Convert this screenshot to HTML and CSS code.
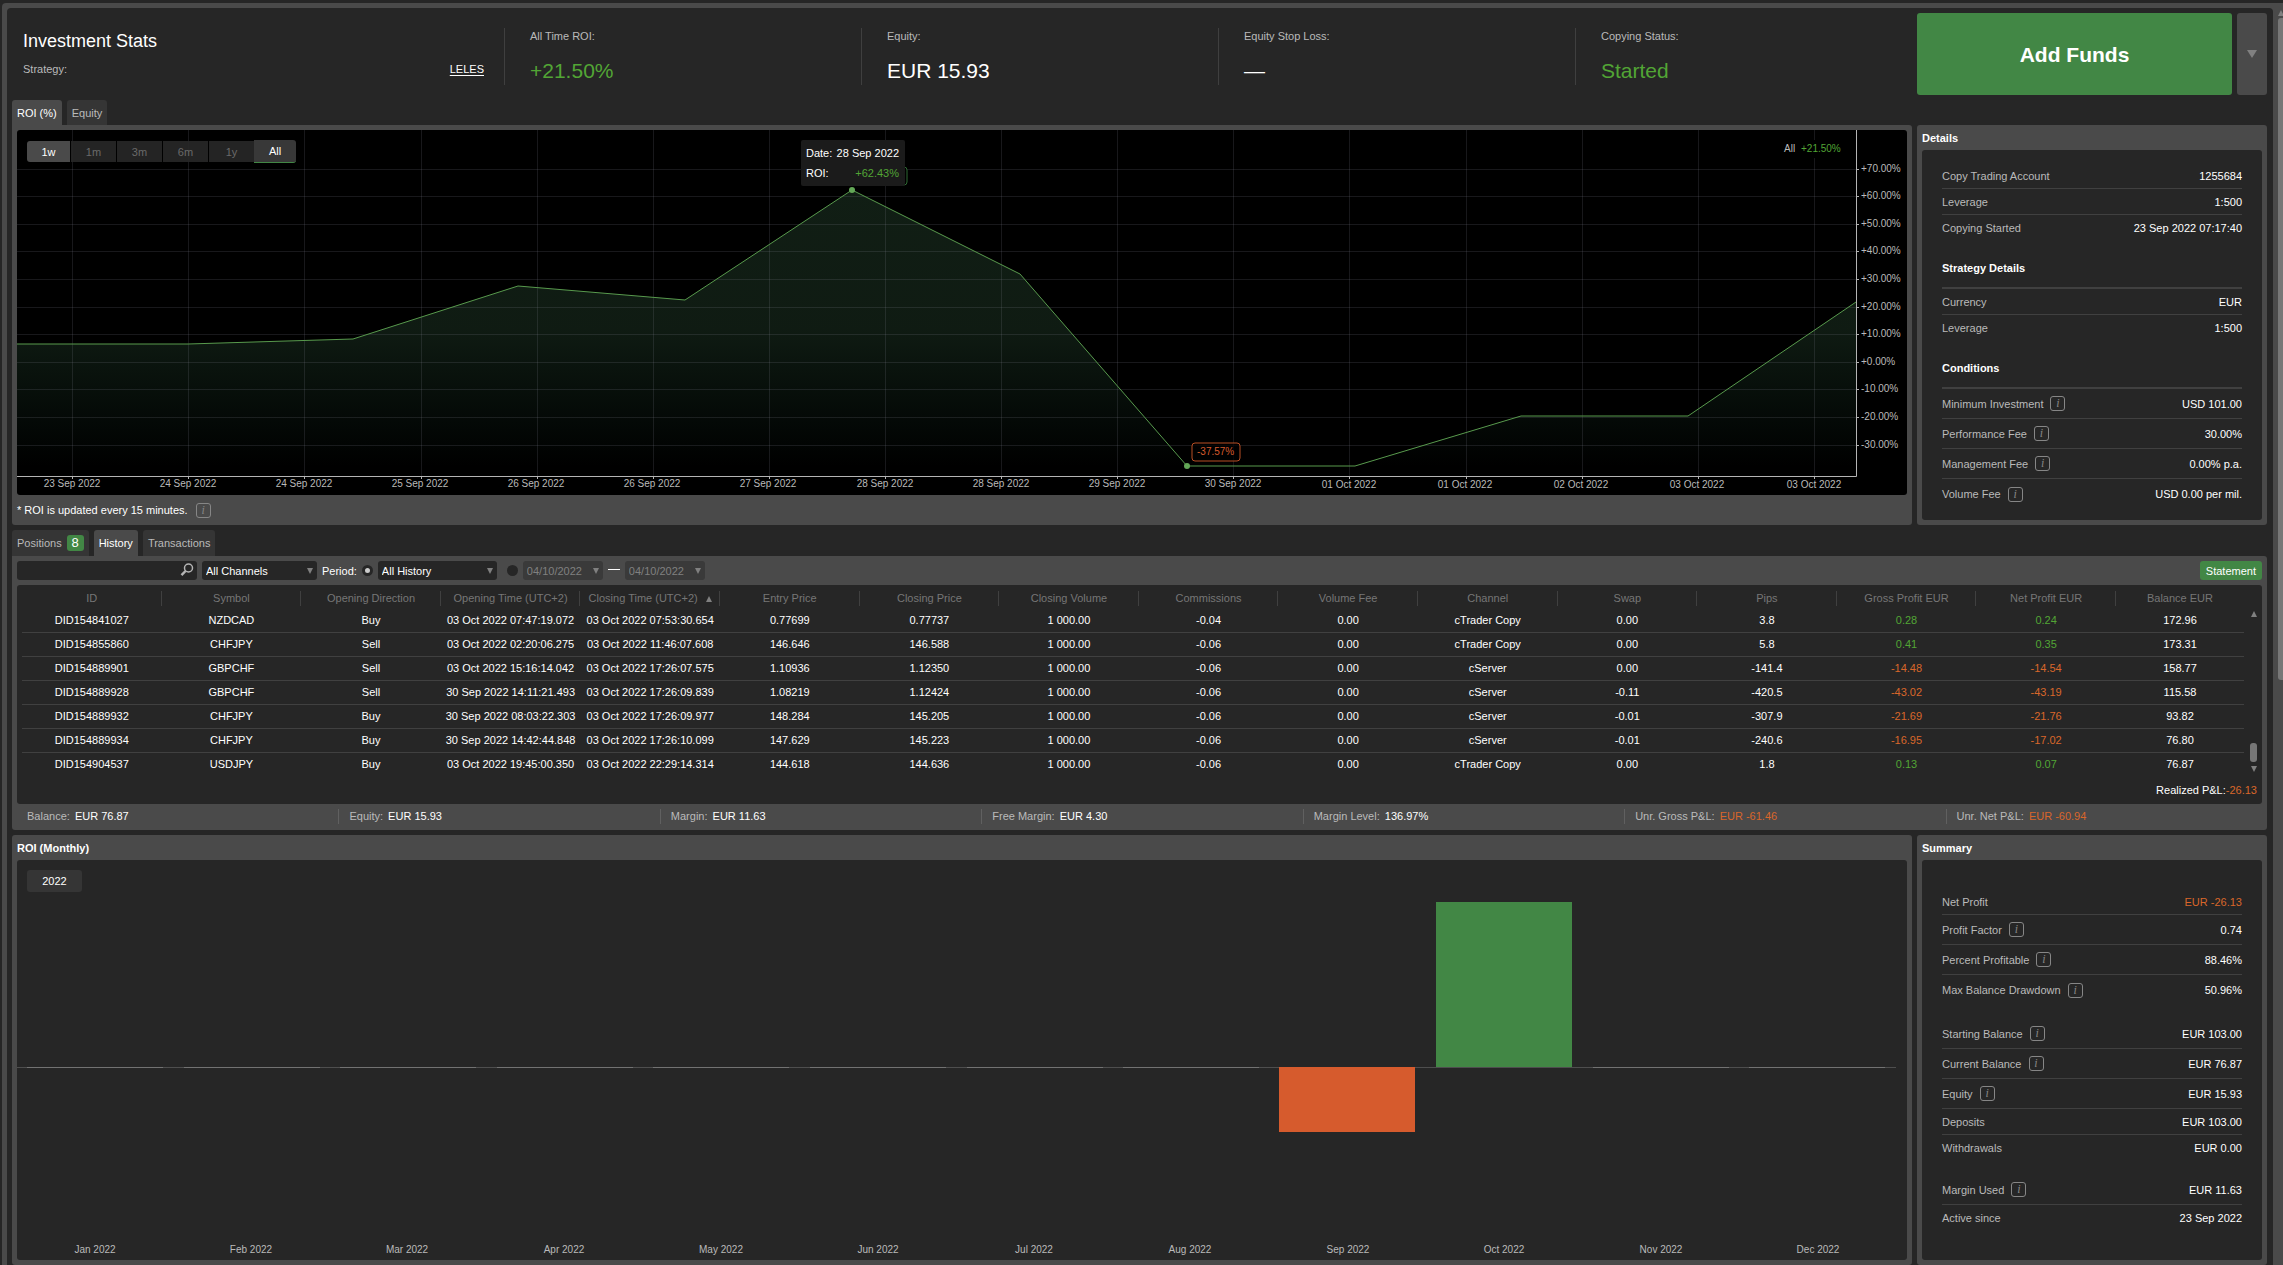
FILE: index.html
```html
<!DOCTYPE html>
<html lang="en">
<head>
    <meta charset="UTF-8">
    <meta name="viewport" content="width=device-width, initial-scale=1.0">
    <title>Investment Stats</title>
    <link rel="stylesheet" href="styles.css">
</head>
<body>

<div class="window">
<main class="page">

<header class="top">
    <div class="stats">
        <div class="title">
            <h1>Investment Stats</h1>
            <p class="strategy"><span>Strategy:</span> <a href="#">LELES</a></p>
        </div>
        <div class="stat">
            <span class="stat-label">All Time ROI:</span>
            <span class="stat-value green">+21.50%</span>
        </div>
        <div class="stat">
            <span class="stat-label">Equity:</span>
            <span class="stat-value">EUR 15.93</span>
        </div>
        <div class="stat">
            <span class="stat-label">Equity Stop Loss:</span>
            <span class="stat-value">—</span>
        </div>
        <div class="stat">
            <span class="stat-label">Copying Status:</span>
            <span class="stat-value green">Started</span>
        </div>
    </div>
    <div class="funds">
        <button class="add-funds">Add Funds</button>
        <button class="more" aria-label="More actions"><span class="arrow-down"></span></button>
    </div>
</header>

<nav class="tabs">
    <button class="tab active">ROI (%)</button>
    <button class="tab">Equity</button>
</nav>

<div class="columns">
    <section class="panel attached">
        <div class="chart-box black">
            <svg class="chart" viewBox="0 0 1890 365">
                <defs>
                    <linearGradient id="area" gradientUnits="userSpaceOnUse" x1="0" y1="60" x2="0" y2="336">
                        <stop offset="0" stop-color="#508f62" stop-opacity="0.21"/>
                        <stop offset="0.5" stop-color="#508f62" stop-opacity="0.19"/>
                        <stop offset="0.95" stop-color="#3c8f62" stop-opacity="0.02"/>
                        <stop offset="1" stop-color="#508f62" stop-opacity="0"/>
                    </linearGradient>
                </defs>
                <path fill="url(#area)" d="M0 214L171 214L336 209L501 156L668 170L835 60L1003 144L1170 336L1338 336L1504 286L1671 286L1839 172V346H0Z"/>
                <!-- grid -->
                <path class="grid" d="M0 39.5H1839M0 66.5H1839M0 94.5H1839M0 121.5H1839M0 149.5H1839M0 177.5H1839M0 204.5H1839M0 232.5H1839M0 259.5H1839M0 287.5H1839M0 315.5H1839"/>
                <path class="grid" d="M55.5 0V346M171.5 0V346M287.5 0V346M404.5 0V346M520.5 0V346M636.5 0V346M752.5 0V346M868.5 0V346M984.5 0V346M1100.5 0V346M1216.5 0V346M1332.5 0V346M1449.5 0V346M1565.5 0V346M1681.5 0V346M1797.5 0V346"/>
                <!-- axes and ticks -->
                <path class="axis" d="M0 346.5H1839.5V0M1840 39.5h2M1840 66.5h2M1840 94.5h2M1840 121.5h2M1840 149.5h2M1840 177.5h2M1840 204.5h2M1840 232.5h2M1840 259.5h2M1840 287.5h2M1840 315.5h2"/>
                <path class="axis" d="M55.5 347v2M171.5 347v2M287.5 347v2M404.5 347v2M520.5 347v2M636.5 347v2M752.5 347v2M868.5 347v2M984.5 347v2M1100.5 347v2M1216.5 347v2M1332.5 347v2M1449.5 347v2M1565.5 347v2M1681.5 347v2M1797.5 347v2"/>
                <path class="series" d="M0 214L171 214L336 209L501 156L668 170L835 60L1003 144L1170 336L1338 336L1504 286L1671 286L1839 172"/>
                <g class="ticks">
                    <text x="1844" y="42">+70.00%</text>
                    <text x="1844" y="69">+60.00%</text>
                    <text x="1844" y="97">+50.00%</text>
                    <text x="1844" y="124">+40.00%</text>
                    <text x="1844" y="152">+30.00%</text>
                    <text x="1844" y="180">+20.00%</text>
                    <text x="1844" y="207">+10.00%</text>
                    <text x="1844" y="235">+0.00%</text>
                    <text x="1844" y="262">-10.00%</text>
                    <text x="1844" y="290">-20.00%</text>
                    <text x="1844" y="318">-30.00%</text>
                </g>
                <g class="ticks centered">
                    <text x="55" y="357">23 Sep 2022</text>
                    <text x="171" y="357">24 Sep 2022</text>
                    <text x="287" y="357">24 Sep 2022</text>
                    <text x="403" y="357">25 Sep 2022</text>
                    <text x="519" y="357">26 Sep 2022</text>
                    <text x="635" y="357">26 Sep 2022</text>
                    <text x="751" y="357">27 Sep 2022</text>
                    <text x="868" y="357">28 Sep 2022</text>
                    <text x="984" y="357">28 Sep 2022</text>
                    <text x="1100" y="357">29 Sep 2022</text>
                    <text x="1216" y="357">30 Sep 2022</text>
                    <text x="1332" y="358">01 Oct 2022</text>
                    <text x="1448" y="358">01 Oct 2022</text>
                    <text x="1564" y="358">02 Oct 2022</text>
                    <text x="1680" y="358">03 Oct 2022</text>
                    <text x="1797" y="358">03 Oct 2022</text>
                </g>
                <circle class="dot" cx="835" cy="60" r="3"/>
                <circle class="dot" cx="1170" cy="336" r="3"/>
                <!-- total -->
                <rect x="1759" y="10" width="69" height="18"/>
                <text class="small" x="1767" y="22">All</text>
                <text class="small pos" x="1784" y="22">+21.50%</text>
                <!-- min and max labels -->
                <rect class="min-label" x="1175" y="313" width="48" height="18" rx="3"/>
                <text class="small min-text" x="1180" y="325">-37.57%</text>
                <rect class="max-label" x="841" y="37" width="49" height="18" rx="3"/>
                <rect class="tip" x="784" y="10" width="104" height="46" rx="2"/>
                <text class="tip-text" x="789" y="27">Date:</text>
                <text class="tip-text end" x="882" y="27">28 Sep 2022</text>
                <text class="tip-text" x="789" y="47">ROI:</text>
                <text class="tip-text end pos" x="882" y="47">+62.43%</text>
            </svg>
            <div class="ranges">
                <button class="range hover">1w</button>
                <button class="range">1m</button>
                <button class="range">3m</button>
                <button class="range">6m</button>
                <button class="range">1y</button>
                <button class="range all">All</button>
            </div>
        </div>
        <p class="note">* ROI is updated every 15 minutes. <i class="info">i</i></p>
    </section>

    <section class="panel">
        <h2>Details</h2>
        <div class="box details">
            <dl>
                <div><dt>Copy Trading Account</dt><dd>1255684</dd></div>
                <div><dt>Leverage</dt><dd>1:500</dd></div>
                <div><dt>Copying Started</dt><dd>23 Sep 2022 07:17:40</dd></div>
            </dl>
            <h3>Strategy Details</h3>
            <dl>
                <div><dt>Currency</dt><dd>EUR</dd></div>
                <div><dt>Leverage</dt><dd>1:500</dd></div>
            </dl>
            <h3>Conditions</h3>
            <dl>
                <div class="tall"><dt>Minimum Investment <i class="info">i</i></dt><dd>USD 101.00</dd></div>
                <div class="tall"><dt>Performance Fee <i class="info">i</i></dt><dd>30.00%</dd></div>
                <div class="tall"><dt>Management Fee <i class="info">i</i></dt><dd>0.00% p.a.</dd></div>
                <div class="tall"><dt>Volume Fee <i class="info">i</i></dt><dd>USD 0.00 per mil.</dd></div>
            </dl>
        </div>
    </section>
</div>

<nav class="tabs lower">
    <button class="tab">Positions <span class="badge">8</span></button>
    <button class="tab active">History</button>
    <button class="tab">Transactions</button>
</nav>

<section class="panel attached history">
    <form class="toolbar">
        <div class="search">
            <input type="text" aria-label="Search">
            <svg viewBox="0 0 14 14" width="14" height="14"><circle cx="8.500" cy="5" r="4" fill="none" stroke="#b5b5b5" stroke-width="1.500"/><path d="M5.500 8L1.500 12.200" stroke="#b5b5b5" stroke-width="2.500"/></svg>
        </div>
        <div class="select channels">
            <select aria-label="Channel"><option>All Channels</option></select>
        </div>
        <label for="period-all">Period:</label>
        <input type="radio" name="period" id="period-all" checked>
        <div class="select period">
            <select aria-label="Period"><option>All History</option></select>
        </div>
        <input type="radio" name="period" id="period-range" aria-label="Date range" class="range-radio">
        <div class="select date">
            <select aria-label="From" disabled><option>04/10/2022</option></select>
        </div>
        <span class="dash"></span>
        <div class="select date">
            <select aria-label="To" disabled><option>04/10/2022</option></select>
        </div>
        <button type="button" class="statement">Statement</button>
    </form>

    <div class="box">
        <div class="table-row">
        <div class="table-wrap">
        <table>
            <thead>
                <tr>
                    <th>ID</th><th>Symbol</th><th>Opening Direction</th><th>Opening Time (UTC+2)</th>
                    <th>Closing Time (UTC+2)<span class="arrow-up"></span></th>
                    <th>Entry Price</th><th>Closing Price</th><th>Closing Volume</th><th>Commissions</th>
                    <th>Volume Fee</th><th>Channel</th><th>Swap</th><th>Pips</th>
                    <th>Gross Profit EUR</th><th>Net Profit EUR</th><th class="last">Balance EUR</th>
                </tr>
            </thead>
            <tbody>
                <tr>
                    <td>DID154841027</td><td>NZDCAD</td><td>Buy</td><td>03 Oct 2022 07:47:19.072</td><td>03 Oct 2022 07:53:30.654</td>
                    <td>0.77699</td><td>0.77737</td><td>1 000.00</td><td>-0.04</td><td>0.00</td><td>cTrader Copy</td><td>0.00</td>
                    <td>3.8</td><td class="green">0.28</td><td class="green">0.24</td><td>172.96</td>
                </tr>
                <tr>
                    <td>DID154855860</td><td>CHFJPY</td><td>Sell</td><td>03 Oct 2022 02:20:06.275</td><td>03 Oct 2022 11:46:07.608</td>
                    <td>146.646</td><td>146.588</td><td>1 000.00</td><td>-0.06</td><td>0.00</td><td>cTrader Copy</td><td>0.00</td>
                    <td>5.8</td><td class="green">0.41</td><td class="green">0.35</td><td>173.31</td>
                </tr>
                <tr>
                    <td>DID154889901</td><td>GBPCHF</td><td>Sell</td><td>03 Oct 2022 15:16:14.042</td><td>03 Oct 2022 17:26:07.575</td>
                    <td>1.10936</td><td>1.12350</td><td>1 000.00</td><td>-0.06</td><td>0.00</td><td>cServer</td><td>0.00</td>
                    <td>-141.4</td><td class="orange">-14.48</td><td class="orange">-14.54</td><td>158.77</td>
                </tr>
                <tr>
                    <td>DID154889928</td><td>GBPCHF</td><td>Sell</td><td>30 Sep 2022 14:11:21.493</td><td>03 Oct 2022 17:26:09.839</td>
                    <td>1.08219</td><td>1.12424</td><td>1 000.00</td><td>-0.06</td><td>0.00</td><td>cServer</td><td>-0.11</td>
                    <td>-420.5</td><td class="orange">-43.02</td><td class="orange">-43.19</td><td>115.58</td>
                </tr>
                <tr>
                    <td>DID154889932</td><td>CHFJPY</td><td>Buy</td><td>30 Sep 2022 08:03:22.303</td><td>03 Oct 2022 17:26:09.977</td>
                    <td>148.284</td><td>145.205</td><td>1 000.00</td><td>-0.06</td><td>0.00</td><td>cServer</td><td>-0.01</td>
                    <td>-307.9</td><td class="orange">-21.69</td><td class="orange">-21.76</td><td>93.82</td>
                </tr>
                <tr>
                    <td>DID154889934</td><td>CHFJPY</td><td>Buy</td><td>30 Sep 2022 14:42:44.848</td><td>03 Oct 2022 17:26:10.099</td>
                    <td>147.629</td><td>145.223</td><td>1 000.00</td><td>-0.06</td><td>0.00</td><td>cServer</td><td>-0.01</td>
                    <td>-240.6</td><td class="orange">-16.95</td><td class="orange">-17.02</td><td>76.80</td>
                </tr>
                <tr>
                    <td>DID154904537</td><td>USDJPY</td><td>Buy</td><td>03 Oct 2022 19:45:00.350</td><td>03 Oct 2022 22:29:14.314</td>
                    <td>144.618</td><td>144.636</td><td>1 000.00</td><td>-0.06</td><td>0.00</td><td>cTrader Copy</td><td>0.00</td>
                    <td>1.8</td><td class="green">0.13</td><td class="green">0.07</td><td>76.87</td>
                </tr>
            </tbody>
        </table>
        </div>
        <div class="table-scroll">
            <span class="arrow-up"></span>
            <span class="table-thumb"></span>
            <span class="arrow-down"></span>
        </div>
        </div>
        <p class="realized">Realized P&amp;L:<span class="orange">-26.13</span></p>
    </div>

    <ul class="status">
        <li>Balance: <b>EUR 76.87</b></li>
        <li>Equity: <b>EUR 15.93</b></li>
        <li>Margin: <b>EUR 11.63</b></li>
        <li>Free Margin: <b>EUR 4.30</b></li>
        <li>Margin Level: <b>136.97%</b></li>
        <li>Unr. Gross P&amp;L: <b class="orange">EUR -61.46</b></li>
        <li>Unr. Net P&amp;L: <b class="orange">EUR -60.94</b></li>
    </ul>
</section>

<div class="columns">
    <section class="panel">
        <h2>ROI (Monthly)</h2>
        <div class="chart-box">
            <svg class="chart" viewBox="0 0 1890 400">
                <path stroke="#4e4e4e" d="M0 207.500H1879"/>
                <path stroke="#727272" d="M10 207.500h136M167 207.500h136M323 207.500h136M480 207.500h136M636 207.500h136M793 207.500h136M950 207.500h136M1106 207.500h136M1576 207.500h136M1732 207.500h136"/>
                <rect x="1262" y="207" width="136" height="65" fill="#d65b2d"/>
                <rect x="1419" y="42" width="136" height="165" fill="#428745"/>
                <g class="ticks centered">
                    <text x="78" y="393">Jan 2022</text>
                    <text x="234" y="393">Feb 2022</text>
                    <text x="390" y="393">Mar 2022</text>
                    <text x="547" y="393">Apr 2022</text>
                    <text x="704" y="393">May 2022</text>
                    <text x="861" y="393">Jun 2022</text>
                    <text x="1017" y="393">Jul 2022</text>
                    <text x="1173" y="393">Aug 2022</text>
                    <text x="1331" y="393">Sep 2022</text>
                    <text x="1487" y="393">Oct 2022</text>
                    <text x="1644" y="393">Nov 2022</text>
                    <text x="1801" y="393">Dec 2022</text>
                </g>
            </svg>
            <button class="year">2022</button>
        </div>
    </section>

    <section class="panel">
        <h2>Summary</h2>
        <div class="box summary">
            <dl>
                <div><dt>Net Profit</dt><dd class="orange">EUR -26.13</dd></div>
                <div class="tall"><dt>Profit Factor <i class="info">i</i></dt><dd>0.74</dd></div>
                <div class="tall"><dt>Percent Profitable <i class="info">i</i></dt><dd>88.46%</dd></div>
                <div class="tall"><dt>Max Balance Drawdown <i class="info">i</i></dt><dd>50.96%</dd></div>
            </dl>
            <dl>
                <div class="tall"><dt>Starting Balance <i class="info">i</i></dt><dd>EUR 103.00</dd></div>
                <div class="tall"><dt>Current Balance <i class="info">i</i></dt><dd>EUR 76.87</dd></div>
                <div class="tall"><dt>Equity <i class="info">i</i></dt><dd>EUR 15.93</dd></div>
                <div><dt>Deposits</dt><dd>EUR 103.00</dd></div>
                <div><dt>Withdrawals</dt><dd>EUR 0.00</dd></div>
            </dl>
            <dl>
                <div class="tall"><dt>Margin Used <i class="info">i</i></dt><dd>EUR 11.63</dd></div>
                <div><dt>Active since</dt><dd>23 Sep 2022</dd></div>
            </dl>
        </div>
    </section>
</div>

</main>
<div class="page-scroll">
    <span class="arrow-up"></span>
    <span class="page-thumb"></span>
</div>
</div>

</body>
</html>
```
FILE: styles.css
```css
* {
    box-sizing: border-box;
}
body {
    margin: 0;
    overflow: hidden;
    background-color: #262626;
    color: #fff;
    font-family: "Liberation Sans", Arial, sans-serif;
    font-size: 11px;
}
h1, h2, h3, p, dl, dd, ul {
    margin: 0;
    padding: 0;
}
button, input, select {
    font-family: inherit;
    font-size: 11px;
    color: #fff;
    border: 0;
    margin: 0;
    padding: 0;
}
.green {
    color: #52a535;
}
.orange {
    color: #d9662a;
}
.arrow-down, .arrow-up {
    display: inline-block;
    border: 3px solid transparent;
    flex: none;
}
.arrow-down {
    border-top: 6px solid #808080;
    border-bottom: 0;
}
.arrow-up {
    border-bottom: 6px solid #808080;
    border-top: 0;
}

/* page frame */
.window {
    display: flex;
    margin: 3px 0 0 2px;
    padding: 5px 0 0 5px;
    background-color: #4a4a4a;
    border-radius: 4px 0 0 0;
}
.page {
    flex: 1;
    min-width: 0;
    padding: 0 6px 0 5px;
    background-color: #262626;
    border-radius: 4px 4px 0 0;
}
.page-scroll {
    width: 10px;
    padding: 2px 0 0 5px;
    overflow: hidden;
}
.page-scroll .arrow-up {
    display: block;
    margin-bottom: 2px;
}
.page-thumb {
    display: block;
    width: 9px;
    height: 662px;
    border-radius: 3px;
    background-color: #777;
}

/* header */
.top {
    display: flex;
    gap: 5px;
    height: 92px;
}
.stats {
    flex: 1;
    display: grid;
    grid-template-columns: 492fr 357fr 357fr 357fr 337fr;
    padding-top: 20px;
}
.title {
    padding: 0 20px 0 11px;
}
h1 {
    font-size: 18px;
    font-weight: normal;
    line-height: 26px;
}
.strategy {
    display: flex;
    justify-content: space-between;
    margin-top: 7px;
    line-height: 16px;
    color: #bababa;
}
.strategy a {
    color: #fff;
    text-underline-offset: 2px;
}
.stat {
    height: 57px;
    padding-left: 25px;
    border-left: 1px solid #3f3f3f;
    display: flex;
    flex-direction: column;
    justify-content: space-between;
}
.stat-label {
    line-height: 16px;
    color: #bababa;
}
.stat-value {
    font-size: 21px;
    line-height: 28px;
}
.funds {
    width: 350px;
    height: 82px;
    margin-top: 5px;
    display: flex;
    gap: 5px;
}
.add-funds {
    flex: 1;
    padding-top: 2px;
    background-color: #428745;
    border-radius: 3px;
    font-size: 21px;
    font-weight: bold;
}
.more {
    width: 30px;
    background-color: #4a4a4a;
    border-radius: 3px;
}
.more .arrow-down {
    border-width: 8px 5px 0 5px;
}

/* tabs */
.tabs {
    display: flex;
    gap: 5px;
}
.tab {
    height: 25px;
    padding: 0 5px;
    display: flex;
    align-items: center;
    gap: 5px;
    background-color: #353535;
    color: #bababa;
    border-radius: 3px 3px 0 0;
}
.tab.active {
    background-color: #4a4a4a;
    color: #fff;
}
.lower {
    margin-top: 5px;
}
.lower .tab {
    height: 26px;
}
.badge {
    width: 17px;
    line-height: 16px;
    border-radius: 3px;
    background-color: #428745;
    color: #fff;
    font-size: 13px;
    text-align: center;
}

/* panels */
.columns {
    display: grid;
    grid-template-columns: minmax(0, 1fr) 350px;
    gap: 5px;
}
.panel {
    display: flex;
    flex-direction: column;
    min-width: 0;
    padding: 0 5px 5px;
    background-color: #4a4a4a;
    border-radius: 3px;
}
.panel.attached {
    padding-top: 5px;
    padding-bottom: 0;
    border-radius: 0 3px 3px 3px;
}
h2 {
    font-size: 11px;
    line-height: 26px;
    height: 25px;
}
.box, .chart-box {
    background-color: #262626;
    border-radius: 3px;
}
.box {
    flex: 1;
}
.chart-box {
    position: relative;
    overflow: hidden;
}
.black {
    background-color: #000;
}
.note {
    display: flex;
    align-items: center;
    gap: 8px;
    height: 30px;
}
.info {
    display: inline-block;
    width: 15px;
    height: 15px;
    border: 1px solid #868686;
    border-radius: 3px;
    color: #868686;
    font-family: "Liberation Serif", "Times New Roman", serif;
    font-size: 12px;
    line-height: 13px;
    text-align: center;
}

/* charts */
.chart {
    display: block;
    width: 100%;
    height: auto;
}
.grid {
    fill: none;
    stroke: #8c8ca0;
    stroke-opacity: 0.17;
}
.axis {
    fill: none;
    stroke: #b4b4b4;
}
.series {
    fill: none;
    stroke: #589a4d;
}
.dot {
    fill: #63a857;
}
.ticks, .small {
    font-size: 10px;
    fill: #bababa;
}
.centered {
    text-anchor: middle;
}
.end {
    text-anchor: end;
}
.min-label {
    fill: #000;
    fill-opacity: 0.7;
    stroke: #b84e24;
}
.max-label {
    fill: #000;
    stroke: #2f6b34;
}
.tip {
    fill: #1b1b1b;
}
.tip-text {
    font-size: 11px;
    fill: #fff;
}
.min-text {
    fill: #d65b2d;
}
.small.pos, .tip-text.pos {
    fill: #52a535;
}
.ranges {
    position: absolute;
    left: 10px;
    top: 10px;
    display: flex;
    align-items: center;
    gap: 1px;
}
.range {
    width: 45px;
    height: 21px;
    background-color: rgba(40, 40, 40, 0.9);
    color: #6a6a6a;
}
.range.hover {
    width: 43px;
    border-radius: 3px 0 0 3px;
    background-color: #4a4a4a;
    color: #fff;
}
.range.all {
    width: 42px;
    height: 23px;
    margin-left: -1px;
    border-bottom: 1px solid #428745;
    border-radius: 0 3px 3px 0;
    background-color: #383838;
    color: #fff;
}
.year {
    position: absolute;
    left: 10px;
    top: 10px;
    width: 55px;
    height: 22px;
    border-radius: 3px;
    background-color: #353535;
}

/* details and summary */
.details {
    padding: 13px 20px 0;
}
.summary {
    padding: 29px 20px 0;
}
.summary dl + dl {
    margin-top: 14px;
}
dl div {
    display: flex;
    justify-content: space-between;
    align-items: center;
    height: 26px;
    border-bottom: 1px solid #404040;
}
dl div:last-child {
    border-bottom: 0;
}
dl .tall {
    height: 30px;
}
dt {
    display: flex;
    align-items: center;
    gap: 7px;
    color: #bababa;
}
h3 {
    margin-top: 8px;
    font-size: 11px;
    line-height: 38px;
    border-bottom: 2px solid #404040;
}

/* history toolbar */
.toolbar {
    display: flex;
    align-items: center;
    gap: 5px;
    height: 19px;
    margin-bottom: 5px;
}
.search {
    width: 180px;
    height: 19px;
    padding-right: 3px;
    display: flex;
    background-color: #262626;
    border-radius: 3px;
}
.search input {
    flex: 1;
    min-width: 0;
    background: none;
}
.search svg {
    margin-top: 2px;
}
.select {
    display: flex;
    align-items: center;
    height: 19px;
    padding-right: 4px;
    background-color: #262626;
    border-radius: 3px;
}
.select select {
    flex: 1;
    min-width: 0;
    height: 19px;
    padding-left: 4px;
    appearance: none;
    background: none;
}
.select::after {
    content: "";
    border: 3px solid transparent;
    border-top: 6px solid #808080;
    border-bottom: 0;
}
.channels {
    width: 115px;
}
.period {
    width: 119px;
}
.date {
    width: 80px;
    background-color: #3a3a3a;
}
.date select {
    color: #808080;
    opacity: 1;
}
.toolbar input[type="radio"] {
    appearance: none;
    width: 11px;
    height: 11px;
    border-radius: 50%;
    background-color: #262626;
}
.toolbar input[type="radio"]:checked {
    border: 3px solid #262626;
    background-color: #ccc;
}
.toolbar .range-radio {
    margin-left: 5px;
}
.dash {
    width: 12px;
    height: 1px;
    margin-bottom: 2px;
    background-color: #fff;
}
.statement {
    height: 19px;
    margin-left: auto;
    padding: 0 6px;
    border-radius: 3px;
    background-color: #428745;
}

/* history table */
.table-row {
    display: flex;
    padding-left: 5px;
}
.table-wrap {
    flex: 1;
    min-width: 0;
}
table {
    width: 100%;
    table-layout: fixed;
    border-collapse: collapse;
}
th, td {
    padding: 0;
    text-align: center;
    white-space: nowrap;
}
th {
    height: 23px;
    padding-top: 2px;
    color: #767676;
    font-weight: normal;
    background: linear-gradient(#404040, #404040) right 6px / 1px 15px no-repeat;
}
th.last {
    width: 128px;
    background: none;
}
th .arrow-up {
    margin-left: 8px;
}
td {
    height: 24px;
    border-bottom: 1px solid #404040;
}
tbody tr:last-child td {
    border-bottom: 0;
}
.table-scroll {
    width: 18px;
    padding: 26px 4px 4px 5px;
    display: flex;
    flex-direction: column;
    align-items: center;
}
.table-thumb {
    width: 7px;
    height: 19px;
    margin: auto 0 4px;
    border-radius: 3px;
    background-color: #777;
}
.realized {
    padding-right: 5px;
    line-height: 29px;
    height: 28px;
    text-align: right;
}
.status {
    display: grid;
    grid-template-columns: repeat(7, 1fr);
    margin-right: -5px;
    padding: 5px 0 6px;
    list-style: none;
    line-height: 15px;
}
.status li {
    padding-left: 10px;
    color: #bababa;
}
.status li + li {
    border-left: 1px solid #606060;
}
.status b {
    margin-left: 2px;
    color: #fff;
    font-weight: normal;
}
.status b.orange {
    color: #d9662a;
}
.history {
    margin-bottom: 5px;
}
```
